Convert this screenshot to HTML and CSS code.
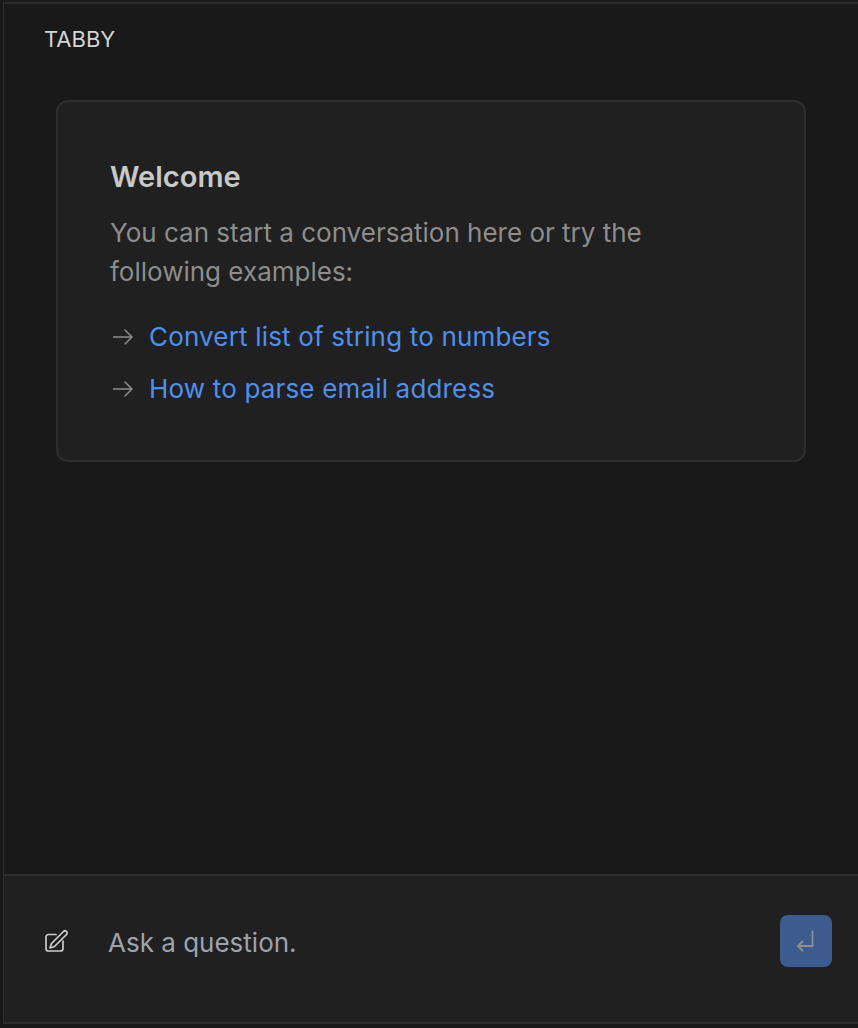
FILE: index.html
```html
<!DOCTYPE html>
<html lang="en">
<head>
<meta charset="utf-8">
<title>Tabby</title>
<link rel="stylesheet" href="styles.css">
</head>
<body>
<div class="frame">
  <main class="content">
    <header class="brand">TABBY</header>
    <section class="card">
      <h1 class="title">Welcome</h1>
      <p class="intro">You can start a conversation here or try the following examples:</p>
      <ul class="examples">
        <li class="example">
          <svg class="arrow" viewBox="0 0 24 24" fill="none" stroke="currentColor" stroke-width="1.5" stroke-linecap="round" stroke-linejoin="round"><path d="M3.500 12H22M15 5l7 7-7 7"/></svg>
          <a class="link">Convert list of string to numbers</a>
        </li>
        <li class="example">
          <svg class="arrow" viewBox="0 0 24 24" fill="none" stroke="currentColor" stroke-width="1.5" stroke-linecap="round" stroke-linejoin="round"><path d="M3.500 12H22M15 5l7 7-7 7"/></svg>
          <a class="link">How to parse email address</a>
        </li>
      </ul>
    </section>
  </main>
  <footer class="composer">
    <svg class="edit" viewBox="0 0 24 24" fill="none" stroke="currentColor" stroke-width="1.7" stroke-linecap="round" stroke-linejoin="round"><path d="M12 5.500H4.500A2.500 2.500 0 0 0 2 8v11.500A2.500 2.500 0 0 0 4.500 22h12a2.500 2.500 0 0 0 2.500-2.500V12"/><path d="M19.500 2.500a2 2 0 0 1 3 3L10.500 17.500 6 19l1.500-4.500z"/></svg>
    <span class="placeholder">Ask a question.</span>
    <button class="send"><svg class="enter" viewBox="0 0 24 24" fill="none" stroke="currentColor" stroke-width="1.8" stroke-linecap="round" stroke-linejoin="round"><path d="M18.500 2.500V17H4M8.500 12.500L4 17l4.500 4.500"/></svg></button>
  </footer>
</div>
</body>
</html>
```
FILE: styles.css
```css
html, body {
  margin: 0;
  height: 100%;
  background: #191919;
}
.frame {
  box-sizing: border-box;
  width: 858px;
  height: 1028px;
  padding: 2px 0 4px 3px;
  display: flex;
  flex-direction: column;
  font-family: Inter, "Liberation Sans", sans-serif;
}
.content {
  flex: 1;
  min-height: 0;
  border-top: 2px solid #2c2c2c;
  border-left: 1px solid #2c2c2c;
  padding: 0 0 0 40px;
}
.brand {
  margin-top: 22px;
  font-size: 22px;
  line-height: 26px;
  color: #d4d4d4;
}
.card {
  box-sizing: border-box;
  width: 750px;
  height: 362px;
  margin: 48px 0 0 12px;
  padding: 57px 52px 0;
  background: #202020;
  border: 2px solid #2e2e2e;
  border-radius: 12px;
}
.title {
  margin: 0;
  font-size: 29px;
  line-height: 36px;
  font-weight: 600;
  color: #c9c9c9;
}
.intro {
  margin: 18px 0 0;
  width: 580px;
  font-size: 26px;
  line-height: 39px;
  color: #8d8d8d;
}
.examples {
  list-style: none;
  margin: 26px 0 0;
  padding: 0;
}
.example {
  display: flex;
  align-items: center;
  height: 39px;
  margin-bottom: 13px;
  color: #8d8d8d;
}
.arrow {
  width: 24px;
  height: 24px;
  margin-right: 15px;
  flex: none;
}
.link {
  font-size: 26px;
  line-height: 39px;
  letter-spacing: 0.17px;
  color: #4e90f0;
}
.composer {
  box-sizing: border-box;
  height: 150px;
  flex: none;
  display: flex;
  align-items: flex-start;
  padding: 39px 26px 0 40px;
  background: #202020;
  border-top: 2px solid #2e2e2e;
  border-left: 1px solid #2c2c2c;
  border-bottom: 2px solid #2c2c2c;
}
.edit {
  width: 24px;
  height: 24px;
  margin-top: 14px;
  color: #cccccc;
  flex: none;
}
.placeholder {
  margin: 8px 0 0 40px;
  flex: 1;
  font-size: 26px;
  line-height: 39px;
  color: #9ca3af;
}
.send {
  width: 52px;
  height: 52px;
  padding: 0;
  border: 0;
  border-radius: 8px;
  background: #3c5c90;
  color: #8f8f8f;
  display: flex;
  align-items: center;
  justify-content: center;
}
.enter {
  width: 24px;
  height: 24px;
}
```
